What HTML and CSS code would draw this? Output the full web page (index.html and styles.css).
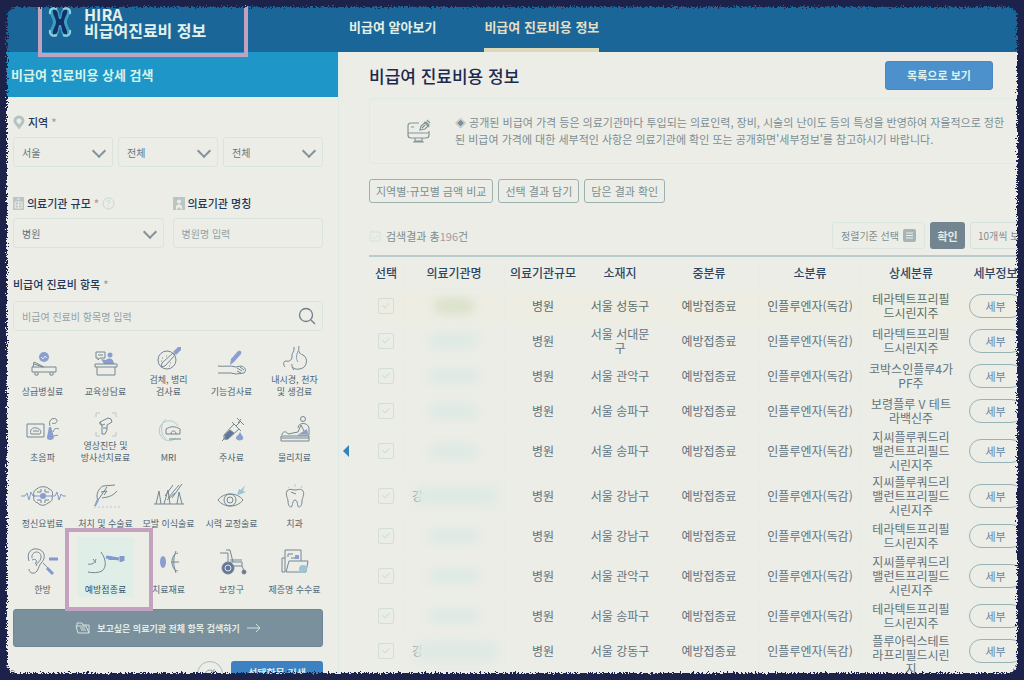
FILE: index.html
```html
<!DOCTYPE html>
<html lang="ko">

<head>
    <meta charset="UTF-8">
    <meta name="viewport" content="width=device-width, initial-scale=1.0">
    <title>비급여 진료비용 정보</title>
    <link rel="stylesheet" href="styles.css">
</head>

<body>
    <header class="header">
        <a href="#" class="logo">
            <svg width="24" height="32" viewBox="0 0 24 32">
                <path d="M2 4c0-3 7-4 9 2l1 5 1-5c2-6 9-5 9-2 1 5-3 8-3 12s4 7 3 12c0 3-7 4-9-2l-1-5-1 5c-2 6-9 5-9 2-1-5 3-8 3-12S1 9 2 4z" fill="#3c9fc0"/>
                <path d="M5 4c3-1 5 2 5 5l1 4h2l1-4c0-3 2-6 5-5 1 4-3 8-3 12s4 8 3 12c-3 1-5-2-5-5l-1-4h-2l-1 4c0 3-2 6-5 5-1-4 3-8 3-12S4 8 5 4z" fill="#142f66"/>
                <path d="M2 8c-1-5 3-7 7-5M22 8c1-5-3-7-7-5M2 24c-1 5 3 7 7 5M22 24c1 5-3 7-7 5" fill="none" stroke="#8ed0d8" stroke-width="2"/>
            </svg>
            <span class="logo-text">HIRA<br>비급여진료비 정보</span>
        </a>
        <nav class="nav">
            <a href="#">비급여 알아보기</a>
            <a href="#" class="active">비급여 진료비용 정보</a>
        </nav>
        <div class="mark mark-logo"></div>
    </header>

    <div class="page">
        <aside class="sidebar">
            <h2 class="panel-title">비급여 진료비용 상세 검색</h2>
            <form class="search">
                <div class="field">
                    <label for="sido" class="label">
                        <svg width="12" height="14" viewBox="0 0 12 14"><path d="M6 2a4 4 0 0 1 4 4c0 2-2 3-4 6-2-3-4-4-4-6a4 4 0 0 1 4-4z" fill="none" stroke="#b4c3c1" stroke-width="3"/></svg>
                        지역 <em>*</em>
                    </label>
                    <div class="row">
                        <div class="select"><select id="sido"><option>서울</option></select></div>
                        <div class="select"><select aria-label="시군구"><option>전체</option></select></div>
                        <div class="select"><select aria-label="읍면동"><option>전체</option></select></div>
                    </div>
                </div>

                <div class="row row-wide">
                    <div class="field">
                        <label for="size" class="label">
                            <svg width="11" height="13" viewBox="0 0 11 13"><path d="M0 0h11v13H0z" fill="#b9c6c4"/><path d="M4 2h3M2 5h7v6H2zM5.500 5v6M2 8h7" fill="none" stroke="#ecede6"/></svg>
                            의료기관 규모 <em>*</em>
                            <svg class="help" width="13" height="13" viewBox="0 0 13 13" fill="none" stroke="#c3d8d3"><circle cx="6.500" cy="6.500" r="5.500"/><path d="M5 5c0-2 3-2 3 0 0 1-1.500 1-1.500 2.500M6.500 9v1"/></svg>
                        </label>
                        <div class="select"><select id="size"><option>병원</option></select></div>
                    </div>
                    <div class="field">
                        <label for="name" class="label">
                            <svg width="12" height="13" viewBox="0 0 12 13"><path d="M0 0h12v13H0z" fill="#b9c6c4"/><circle cx="6" cy="4.500" r="2" fill="#ecede6"/><path d="M3 13V9l3-2 3 2v4l-3-3z" fill="#ecede6"/></svg>
                            의료기관 명칭
                        </label>
                        <input type="text" id="name" placeholder="병원명 입력">
                    </div>
                </div>

                <div class="field">
                    <label for="item" class="label">비급여 진료비 항목 <em>*</em></label>
                    <div class="search-box">
                        <input type="text" id="item" placeholder="비급여 진료비 항목명 입력">
                        <svg width="18" height="18" viewBox="0 0 18 18" fill="none" stroke="#6c7f8a" stroke-width="1.300"><circle cx="8" cy="8" r="6.500"/><path d="M13 13l4 4"/></svg>
                    </div>
                </div>

                <div class="items">
                    <button type="button" class="item">
                        <svg viewBox="0 0 40 28"><circle class="fill" cx="21" cy="11" r="5"/><path d="M18 11l2 2 2-3 2 2" stroke="#e0e9ea"/><path d="M9 21h24v5H9zM10 21l1-5 10 5M11 18l9 3M12 26v3h3v-3M27 26v3h3v-3"/></svg>
                        <span>상급병실료</span>
                    </button>
                    <button type="button" class="item">
                        <svg viewBox="0 0 40 28"><path d="M10 6h9v6h-5l-2 2v-2h-2zM12 9h5"/><circle class="fill" cx="24" cy="9" r="2.500"/><path class="fill" d="M15 13l5 1c3-3 8-1 8 4H18z"/><path d="M9 18h22v3H9zM11 21v8h18v-8"/></svg>
                        <span>교육상담료</span>
                    </button>
                    <button type="button" class="item">
                        <svg viewBox="0 0 40 28"><circle cx="18" cy="14" r="9"/><path d="M12 21l1-4 11-10 2 2-10 11zM13 12h1M17 10h1M21 17h1M20 20h1M12 15h1"/><path class="fill" d="M24 6l5-5 3 0 0 3-5 5z"/></svg>
                        <span>검체, 병리<br>검사료</span>
                    </button>
                    <button type="button" class="item">
                        <svg viewBox="0 0 40 28"><path class="fill" d="M18 19l1-6 7-8c3-1 4 1 3 3l-7 8z"/><path d="M6 20c6 1 12-1 18 1l5-1c4 1 6 4 3 7l-8 1-5-1H6M25 22l5 3M25 25l4 2M28 21l4 3"/></svg>
                        <span>기능검사료</span>
                    </button>
                    <button type="button" class="item">
                        <svg viewBox="0 0 40 28"><path d="M19 1c1 5-3 6-2 10 0 3-3 5-6 4-3 0-3 4-1 6M24 0c-1 5 0 8 4 9 6 3 4 14-4 14-4 1-8-2-7-5M17 21l2 3"/><path d="M23 5c-2 5-2 8 0 11" class="blue"/></svg>
                        <span>내시경, 천자<br>및 생검료</span>
                    </button>
                    <button type="button" class="item">
                        <svg viewBox="0 0 40 28"><path d="M4 12h17v13H4zM8 22c-2-4 2-7 5-6 4 0 6 4 4 6zM10 19h6"/><path class="fill" d="M26 15h2l3 10c0 4-8 4-7 0z"/><path d="M27 14c-2-5 2-9 6-7 3 2-1 6-4 4M30 20c1-4 4-4 6-3M31 24c2-1 3 0 4-1"/></svg>
                        <span>초음파</span>
                    </button>
                    <button type="button" class="item">
                        <svg viewBox="0 0 40 28"><path class="pale" d="M10 5V1h4M26 1h4v4M30 20v4h-4M14 24h-4v-4"/><path d="M14 10l8-4 3 1 1 3-5 3v5l-2 4h-3v-9zM14 10c-1 3 2 4 5 2M17 16h4"/></svg>
                        <span>영상진단 및<br>방사선치료료</span>
                    </button>
                    <button type="button" class="item">
                        <svg viewBox="0 0 40 28"><path class="pale" d="M29 14a10 10 0 1 0-2 12M17 7c-6 4-6 16 0 20"/><path d="M17 17c5-3 9-3 14 0v5H17zM22 22c0-4 5-4 5 0M20 27h12"/></svg>
                        <span>MRI</span>
                    </button>
                    <button type="button" class="item">
                        <svg viewBox="0 0 40 28"><path d="M10 29l3-3M12 23l10-11 5 5-11 10-4 0zM24 14l4-4M25 6l7 7M22 12l-2-2M27 17l2 2M26 11l3-4"/><path class="dark" d="M13 23l5-5 4 3-6 6h-3z"/><path class="fill" d="M28 20c2 4 4 5 3 7s-7 2-7-1c0-2 3-3 4-6z"/></svg>
                        <span>주사료</span>
                    </button>
                    <button type="button" class="item">
                        <svg viewBox="0 0 40 28"><circle cx="28" cy="7" r="2.500"/><path d="M23 16c0-6 10-6 11 0v7H23M6 24h28v5H6zM6 26h28M7 23c0-4 5-4 6-1l10-2 3-7 3 6"/><path class="fill" d="M27 20l5-3 1 5h-9z"/></svg>
                        <span>물리치료</span>
                    </button>
                    <button type="button" class="item">
                        <svg viewBox="0 0 40 28"><path class="blue" d="M-2 18h4l2-3 2 7 2-8 2 4h2M29 18h3l2-4 2 8 2-6 2 2h3"/><path d="M14 11c2-3 10-3 12 0 4 1 4 5 3 7 1 4-1 6-4 7-3 3-8 3-10 0-4-1-5-4-4-7-1-3 0-6 3-7zM14 14h4v-3M26 14h-4v-3M14 22h4v3M26 22h-4v3"/><path class="blue" d="M11 18h18"/><circle class="fill" cx="20" cy="18" r="3"/></svg>
                        <span>정신요법료</span>
                    </button>
                    <button type="button" class="item">
                        <svg viewBox="0 0 40 28"><path d="M12 22c-3-5 1-12 5-14l12-1M16 20c5-1 10-1 15-7M12 22l9-13M15 14l6-1-3 4"/><path class="fill" d="M8 28l3-7 2 1-3 6z"/><path class="pale" d="M8 29h26" stroke-dasharray="2 2"/></svg>
                        <span>처치 및 수술료</span>
                    </button>
                    <button type="button" class="item">
                        <svg viewBox="0 0 40 28"><path d="M5 26h30M7 26l3-13 2 13M15 26l4-14 2 14M28 26l2-12 3 12M16 18L24 7M19 20L30 7M23 20l10-14M18 22l8-7"/></svg>
                        <span>모발 이식술료</span>
                    </button>
                    <button type="button" class="item">
                        <svg viewBox="0 0 40 28"><path d="M6 22c6-8 19-8 25 0-6 8-19 8-25 0z"/><circle cx="18" cy="22" r="6"/><circle cx="18" cy="22" r="3"/><path class="fill sky" d="M25 17l2-6 2 1 4-5-2 6 3 1-5 2z"/></svg>
                        <span>시력 교정술료</span>
                    </button>
                    <button type="button" class="item">
                        <svg viewBox="0 0 40 28"><path d="M12 13c3-3 5-1 8-1s6-2 8 1c2 4-1 7-1 10s-1 6-3 6-1-7-4-7-2 7-4 7-3-3-3-6-3-6-1-10zM16 14l5 2"/><path class="pale" d="M13 9l1 1M20 6v3M27 8l-1 2"/></svg>
                        <span>치과</span>
                    </button>
                    <button type="button" class="item">
                        <svg viewBox="0 0 40 28"><path d="M6 17C3 8 9 4 14 5c8 1 9 9 5 13-3 3-3 6-5 9-3 4-8 2-8-2M9 14c-1-8 10-8 9 0-1 4-4 4-5 8M9 16c4-2 6 1 3 4M20 19l5 5"/><path class="blue thick" d="M26 15h9M24 24l6 6"/></svg>
                        <span>한방</span>
                    </button>
                    <button type="button" class="item selected">
                        <svg viewBox="0 0 40 28"><path d="M15 8c5 7 6 15 1 19-4 2-9 2-14 1M2 20c4 1 7-1 8-5M7 15l3 4"/><path class="blue thick" d="M20 13l13 2M35 12v6M24 12v4M37 12v5"/></svg>
                        <span>예방접종료</span>
                    </button>
                    <button type="button" class="item">
                        <svg viewBox="0 0 40 28"><ellipse class="fill" cx="14" cy="18" rx="3" ry="6"/><path d="M29 9c-8 1-8 17 0 18M27 7c-3 7-3 14 0 22M22 18h8"/></svg>
                        <span>치료재료</span>
                    </button>
                    <button type="button" class="item">
                        <svg viewBox="0 0 40 28"><circle class="dark" cx="16" cy="24" r="6"/><circle cx="16" cy="24" r="3" stroke="#e0e7e8"/><circle class="dark" cx="32" cy="28" r="2"/><path d="M8 9h8v9M14 6h4l3 12M18 18h12v4H20M30 22l2 5M18 16h12"/></svg>
                        <span>보장구</span>
                    </button>
                    <button type="button" class="item">
                        <svg viewBox="0 0 40 28"><path d="M10 28H7V14h3M10 28V6h16v11M11 28l3-11h19l-2 11zM13 13v-3h5M16 14h5"/><circle class="fill sky" cx="28" cy="25" r="4"/><path class="fill" d="M20 11h4v4h-4z"/></svg>
                        <span>제증명 수수료</span>
                    </button>
                    <div class="mark mark-item"></div>
                </div>

                <button type="button" class="btn-all">
                    <svg width="15" height="12" viewBox="0 0 15 12" fill="none" stroke="#d5e2df"><path d="M3 11L1 4h10l3 7zM2 4V1h5l1 2h6v8M5 6h5M6 8h5"/></svg>
                    보고싶은 의료기관 전체 항목 검색하기
                    <svg width="14" height="10" viewBox="0 0 14 10" fill="none" stroke="#d5e2df"><path d="M0 5h13M9 1l4 4-4 4"/></svg>
                </button>
                <div class="actions">
                    <button type="reset" class="btn-reset" aria-label="초기화"><svg width="12" height="12" viewBox="0 0 12 12" fill="none" stroke="#8fa5a8"><path d="M10 4a5 5 0 1 0 1 3M10 1v3H7"/></svg></button>
                    <button type="submit" class="btn-search">선택항목 검색</button>
                </div>
            </form>
            <button type="button" class="fold" aria-label="접기"></button>
        </aside>

        <main class="main">
            <div class="title-bar">
                <h1>비급여 진료비용 정보</h1>
                <button type="button" class="btn-list">목록으로 보기</button>
            </div>

            <div class="notice">
                <svg width="24" height="24" viewBox="0 0 24 24" fill="none" stroke="#839598" stroke-width="1.200"><path d="M12 4H4C2 4 1 5 1 7v9c0 2 1 3 3 3h15c2 0 3-1 3-3V12M1 14h21M8 19v3h7v-3M6 23h11M4 8h3"/><path d="M13 11l1-4 5-4 3 3-4 4zM17 3l5 5M15 9l3-3M20 1l3 3"/></svg>
                <p>◈ 공개된 비급여 가격 등은 의료기관마다 투입되는 의료인력, 장비, 시술의 난이도 등의 특성을 반영하여 자율적으로 정한<br>된 비급여 가격에 대한 세부적인 사항은 의료기관에 확인 또는 공개화면'세부정보'를 참고하시기 바랍니다.</p>
            </div>

            <div class="buttons">
                <button type="button">지역별·규모별 금액 비교</button>
                <button type="button">선택 결과 담기</button>
                <button type="button">담은 결과 확인</button>
            </div>

            <div class="result-bar">
                <svg width="12" height="12" viewBox="0 0 12 12" fill="none" stroke="#d3e3de"><path d="M1 2h10v9H1zM3 0v3M9 0v3M3 7l2 2 4-4"/></svg>
                <p>검색결과 총<b>196</b>건</p>
                <button type="button" class="sort">정렬기준 선택
                    <svg width="13" height="13" viewBox="0 0 13 13"><rect width="13" height="13" rx="2" fill="#a5b4b5"/><path d="M3 4h7M3 6.500h7M3 9h7" stroke="#ecede6"/></svg>
                </button>
                <button type="button" class="btn-ok">확인</button>
                <select class="count" aria-label="목록 개수"><option>10개씩 보기</option></select>
            </div>

            <table class="list">
                <colgroup>
                    <col class="c-check"><col class="c-name"><col class="c-size"><col class="c-size">
                    <col class="c-name"><col class="c-name"><col class="c-name"><col class="c-more">
                </colgroup>
                <thead>
                    <tr><th>선택</th><th>의료기관명</th><th>의료기관규모</th><th>소재지</th><th>중분류</th><th>소분류</th><th>상세분류</th><th>세부정보</th></tr>
                </thead>
                <tbody>
                    <tr class="hover">
                        <td><input type="checkbox" aria-label="선택"></td><td><i class="blur"></i></td><td>병원</td><td>서울 성동구</td><td>예방접종료</td><td>인플루엔자(독감)</td><td>테라텍트프리필<br>드시린지주</td><td><button type="button">세부</button></td>
                    </tr>
                    <tr>
                        <td><input type="checkbox" aria-label="선택"></td><td><i class="blur"></i></td><td>병원</td><td>서울 서대문<br>구</td><td>예방접종료</td><td>인플루엔자(독감)</td><td>테라텍트프리필<br>드시린지주</td><td><button type="button">세부</button></td>
                    </tr>
                    <tr>
                        <td><input type="checkbox" aria-label="선택"></td><td><i class="blur"></i></td><td>병원</td><td>서울 관악구</td><td>예방접종료</td><td>인플루엔자(독감)</td><td>코박스인플루4가<br>PF주</td><td><button type="button">세부</button></td>
                    </tr>
                    <tr>
                        <td><input type="checkbox" aria-label="선택"></td><td><i class="blur"></i></td><td>병원</td><td>서울 송파구</td><td>예방접종료</td><td>인플루엔자(독감)</td><td>보령플루 V 테트<br>라백신주</td><td><button type="button">세부</button></td>
                    </tr>
                    <tr class="tall">
                        <td><input type="checkbox" aria-label="선택"></td><td><i class="blur"></i></td><td>병원</td><td>서울 송파구</td><td>예방접종료</td><td>인플루엔자(독감)</td><td>지씨플루쿼드리<br>밸런트프리필드<br>시린지주</td><td><button type="button">세부</button></td>
                    </tr>
                    <tr class="tall">
                        <td><input type="checkbox" aria-label="선택"></td><td><div class="masked">강<i class="blur wide"></i></div></td><td>병원</td><td>서울 강남구</td><td>예방접종료</td><td>인플루엔자(독감)</td><td>지씨플루쿼드리<br>밸런트프리필드<br>시린지주</td><td><button type="button">세부</button></td>
                    </tr>
                    <tr>
                        <td><input type="checkbox" aria-label="선택"></td><td><i class="blur"></i></td><td>병원</td><td>서울 강남구</td><td>예방접종료</td><td>인플루엔자(독감)</td><td>테라텍트프리필<br>드시린지주</td><td><button type="button">세부</button></td>
                    </tr>
                    <tr class="tall">
                        <td><input type="checkbox" aria-label="선택"></td><td><i class="blur"></i></td><td>병원</td><td>서울 관악구</td><td>예방접종료</td><td>인플루엔자(독감)</td><td>지씨플루쿼드리<br>밸런트프리필드<br>시린지주</td><td><button type="button">세부</button></td>
                    </tr>
                    <tr>
                        <td><input type="checkbox" aria-label="선택"></td><td><i class="blur"></i></td><td>병원</td><td>서울 송파구</td><td>예방접종료</td><td>인플루엔자(독감)</td><td>테라텍트프리필<br>드시린지주</td><td><button type="button">세부</button></td>
                    </tr>
                    <tr>
                        <td><input type="checkbox" aria-label="선택"></td><td><div class="masked">강<i class="blur wide"></i></div></td><td>병원</td><td>서울 강동구</td><td>예방접종료</td><td>인플루엔자(독감)</td><td><div class="clip">플루아릭스테트<br>라프리필드시린<br>지</div></td><td><button type="button">세부</button></td>
                    </tr>
                </tbody>
            </table>
        </main>
    </div>

    <!-- rough paper edge around the whole page -->
    <svg class="defs" width="0" height="0">
        <filter id="rough" x="0" y="0" width="100%" height="100%">
            <feTurbulence type="fractalNoise" baseFrequency="0.6" numOctaves="2" seed="4" result="noise"/>
            <feDisplacementMap in="SourceGraphic" in2="noise" scale="7" xChannelSelector="R" yChannelSelector="G"/>
        </filter>
    </svg>
    <div class="edge"></div>
</body>

</html>
```
FILE: styles.css
```css
* {
    box-sizing: border-box;
}

html,
body {
    height: 100%;
    margin: 0;
    padding: 0;
}

body {
    display: flex;
    flex-direction: column;
    overflow: hidden;
    background-color: #ecede6;
    color: #61747f;
    font-family: 'Noto Sans CJK KR', sans-serif;
    font-size: 12px;
}

button,
input,
select {
    margin: 0;
    font-family: inherit;
    color: inherit;
}

button {
    padding: 0;
    border: 0;
    background: none;
    white-space: nowrap;
}

h1,
h2,
p {
    margin: 0;
}

a {
    color: inherit;
    text-decoration: none;
}

/* header */
.header {
    position: relative;
    z-index: 2;
    display: flex;
    flex: none;
    height: 52px;
    background-color: #1b6698;
    color: #e2f1e9;
}

.logo {
    display: flex;
    width: 349px;
    padding: 6px 0 0 48px;
    gap: 12px;
}

.logo-text {
    font-size: 16px;
    font-weight: 700;
    line-height: 16px;
}

.nav {
    display: flex;
    gap: 48px;
    font-size: 13px;
    font-weight: 700;
    line-height: 54px;
    white-space: nowrap;
}

.nav .active {
    height: 52px;
    color: #e6dfc4;
    border-bottom: 4px solid #ddd8b8;
}

/* pink marker boxes */
.mark {
    position: absolute;
    pointer-events: none;
    border: 4px solid #c3a2bf;
}

.mark-logo {
    top: -8px;
    left: 38px;
    width: 210px;
    height: 65px;
}

.mark-item {
    top: 196px;
    left: 54px;
    width: 88px;
    height: 83px;
}

.page {
    display: flex;
    flex: 1;
    min-height: 0;
}

/* search panel */
.sidebar {
    position: relative;
    flex: none;
    width: 339px;
    border-right: 1px solid #dcebe5;
}

.panel-title {
    height: 45px;
    padding-left: 11px;
    background-color: #1e97c8;
    color: #d5f2ea;
    font-size: 13px;
    font-weight: 700;
    line-height: 45px;
}

.search {
    padding: 15px 15px 0 13px;
}

.field {
    flex: 1;
    min-width: 0;
    margin-bottom: 26px;
}

.label {
    display: flex;
    align-items: center;
    gap: 3px;
    height: 20px;
    margin-bottom: 5px;
    color: #24385a;
    font-size: 11px;
    font-weight: 500;
    white-space: nowrap;
}

.label em {
    color: #b493a4;
    font-style: normal;
}

.row {
    display: flex;
    gap: 5px;
}

.row-wide {
    gap: 9px;
}

.select {
    position: relative;
    flex: 1;
}

.select::after {
    content: '';
    position: absolute;
    top: 9px;
    right: 9px;
    width: 8px;
    height: 8px;
    border: solid #81929a;
    border-width: 0 2px 2px 0;
    transform: rotate(45deg);
    pointer-events: none;
}

.search select,
.search input {
    display: block;
    width: 100%;
    height: 30px;
    padding: 0 8px;
    border: 1px solid #d9e4df;
    border-radius: 3px;
    background: transparent;
    appearance: none;
    font-size: 10px;
}

.search ::placeholder {
    color: #92a3a7;
    opacity: 1;
}

.search-box {
    position: relative;
    margin-top: 7px;
}

.search-box svg {
    position: absolute;
    top: 6px;
    right: 7px;
}

.items {
    position: relative;
    display: grid;
    grid-template-columns: repeat(5, 63px);
    grid-auto-rows: 66px;
    margin: -25px 0 0 -2px;
    padding-top: 1px;
}

.item {
    display: flex;
    flex-direction: column;
    align-items: center;
    padding-top: 13px;
    color: #4d6373;
    font-size: 9px;
    line-height: 12px;
}

.item svg {
    flex: none;
    width: 40px;
    height: 28px;
    overflow: visible;
    fill: none;
    stroke: #748793;
    stroke-width: 1;
}

.item span {
    position: relative;
    display: flex;
    align-items: flex-end;
    height: 24px;
}

.item .fill {
    fill: #8b9ed0;
    stroke: none;
}

.item .sky {
    fill: #9fc3d6;
}

.item .dark {
    fill: #63759c;
}

.item .blue {
    stroke: #8299cb;
}

.item .pale {
    stroke: #b2cbd0;
}

.item .thick {
    stroke-width: 3;
}

.selected {
    background: #e0eee8;
    background-clip: content-box;
    padding: 6px 3px 0;
    color: #344f68;
}

.selected svg {
    margin-top: 7px;
}

.btn-all {
    display: flex;
    align-items: center;
    justify-content: center;
    gap: 7px;
    width: 100%;
    height: 38px;
    margin-top: 12px;
    border: 1px solid #70859a;
    border-radius: 3px;
    background-color: #7a909d;
    color: #e1ece7;
    font-size: 9px;
    font-weight: 700;
}

.actions {
    display: flex;
    justify-content: flex-end;
    gap: 8px;
    margin-top: 14px;
}

.btn-reset {
    width: 26px;
    height: 26px;
    border: 1px solid #a9bcbc;
    border-radius: 50%;
}

.btn-search {
    width: 92px;
    height: 22px;
    border-radius: 3px;
    background-color: #3c82c2;
    color: #d5e8ea;
    font-size: 10px;
    font-weight: 700;
}

.fold {
    position: absolute;
    top: 393px;
    right: -11px;
    border: 6px solid transparent;
    border-right: 6px solid #3285b9;
    border-left: 0;
}

/* result area */
.main {
    flex: 1;
    min-width: 0;
    padding-left: 30px;
    overflow: hidden;
}

.title-bar {
    display: flex;
    align-items: center;
    justify-content: space-between;
    height: 46px;
    padding-right: 31px;
}

.title-bar h1 {
    color: #1c2950;
    font-size: 17px;
    font-weight: 500;
}

.btn-list {
    width: 108px;
    height: 29px;
    border: 1px solid #4a87c4;
    border-radius: 3px;
    background-color: #4c91cb;
    color: #dcf1ec;
    font-size: 11px;
    font-weight: 700;
}

.notice {
    display: flex;
    align-items: center;
    gap: 24px;
    height: 66px;
    padding: 0 0 0 37px;
    border: 1px solid #e0eae5;
    border-right: 0;
    border-radius: 5px 0 0 5px;
    color: #7b8e94;
    font-size: 11px;
    line-height: 17px;
    white-space: nowrap;
}

.notice svg {
    flex: none;
}

.buttons {
    display: flex;
    gap: 5px;
    margin-top: 15px;
}

.buttons button {
    height: 24px;
    padding: 0 6px;
    border: 1px solid #9cb2b2;
    border-radius: 3px;
    color: #7b8e94;
    font-size: 11px;
}

.result-bar {
    display: flex;
    align-items: center;
    gap: 5px;
    width: 674px;
    height: 35px;
    margin-top: 15px;
    color: #7b8e94;
    font-size: 11px;
}

.result-bar b {
    color: #a99aa8;
    font-weight: 400;
}

.sort {
    display: flex;
    align-items: center;
    gap: 4px;
    height: 27px;
    margin-left: auto;
    padding: 0 8px;
    border: 1px solid #dbe6e1;
    border-radius: 3px;
    font-size: 10px;
}

.btn-ok {
    width: 35px;
    height: 27px;
    border-radius: 3px;
    background-color: #728591;
    color: #e2ece8;
    font-size: 11px;
    font-weight: 700;
}

.count {
    width: 73px;
    height: 27px;
    padding: 0 7px;
    border: 1px solid #d3e0dc;
    border-radius: 3px;
    background: transparent;
    appearance: none;
    font-size: 10px;
}

.list {
    width: 661px;
    margin-top: 2px;
    border-top: 2px solid #b9cccb;
    border-spacing: 0;
    table-layout: fixed;
    line-height: 14px;
    text-align: center;
    white-space: nowrap;
}

.c-check {
    width: 35px;
}

.c-name {
    width: 101px;
}

.c-size {
    width: 77px;
}

.c-more {
    width: 68px;
}

.list th,
.list td {
    height: 35px;
    padding: 0;
    border-right: 1px solid #e7ece6;
    border-bottom: 1px solid #e7ece6;
}

.list th {
    height: 32px;
    color: #2f4662;
    font-weight: 500;
}

.list .tall td {
    height: 45px;
}

.list .hover td {
    background-color: #edede4;
    color: #5c6f68;
}

.list input {
    display: block;
    width: 16px;
    height: 16px;
    margin: 0 auto;
    border: 1px solid #d2deda;
    border-radius: 2px;
    appearance: none;
}

.list input::after {
    content: '';
    display: block;
    width: 3px;
    height: 6px;
    margin: 2px 0 0 5px;
    border: solid #d2deda;
    border-width: 0 1px 1px 0;
    transform: rotate(45deg);
}

.list button {
    width: 54px;
    height: 24px;
    border: 1px solid #98b3b6;
    border-radius: 12px;
    color: #6484a8;
    font-size: 11px;
}

/* hidden hospital names */
.blur {
    display: block;
    width: 50px;
    height: 16px;
    margin: 0 auto;
    border-radius: 8px;
    background-color: #dfeae5;
    filter: blur(4px);
}

.masked {
    display: flex;
    align-items: center;
    padding-left: 8px;
}

.blur.wide {
    flex: none;
    width: 84px;
    height: 20px;
    margin: 0 0 0 -9px;
}

.hover .blur {
    width: 40px;
    background-color: #dbe2cb;
}

.clip {
    height: 34px;
}

.defs {
    position: absolute;
}

.edge {
    position: fixed;
    inset: -20px;
    z-index: 5;
    border: 27px solid #1e2148;
    border-radius: 36px;
    filter: url(#rough);
    pointer-events: none;
}
```
